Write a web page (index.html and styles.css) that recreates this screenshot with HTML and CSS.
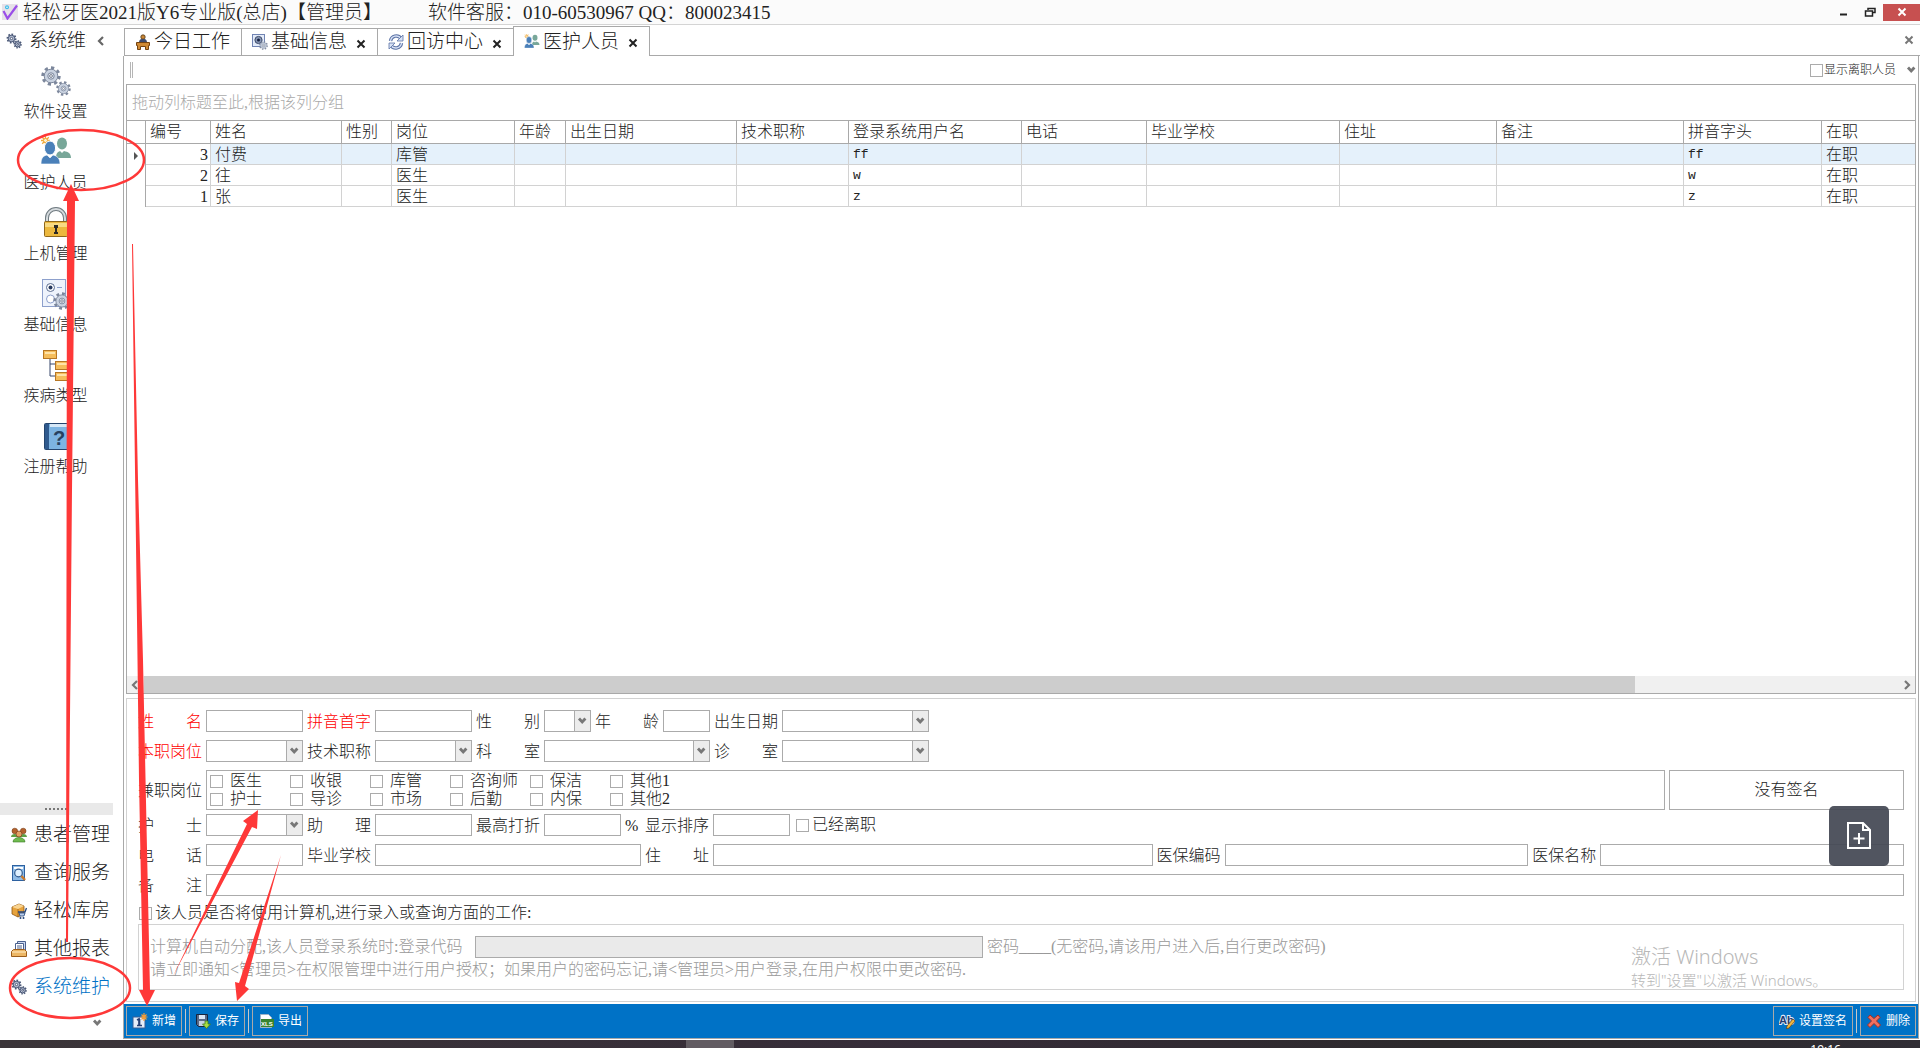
FILE: index.html
```html
<!DOCTYPE html>
<html lang="zh-CN">
<head>
    <meta charset="UTF-8">
    <meta name="viewport" content="width=device-width, initial-scale=1.0">
    <title>轻松牙医2021版Y6专业版(总店)</title>
    <link rel="stylesheet" href="styles.css">
</head>
<body>
    <!-- icon library -->
    <svg class="defs" aria-hidden="true">
        <symbol id="i-down" viewBox="0 0 10 8"><path d="M2 1.500 L5.200 5 L8.400 1.500" fill="none" stroke="currentColor" stroke-width="2.800"/></symbol>
        <symbol id="i-left" viewBox="0 0 8 10"><path d="M6 1 L2 5 L6 9" fill="none" stroke="currentColor" stroke-width="2.2"/></symbol>
        <symbol id="i-right" viewBox="0 0 8 10"><path d="M2 1 L6 5 L2 9" fill="none" stroke="currentColor" stroke-width="2.2"/></symbol>
        <symbol id="i-close" viewBox="0 0 10 10"><path d="M1.5 1.5 L8.5 8.5 M8.5 1.5 L1.5 8.5" fill="none" stroke="currentColor" stroke-width="2"/></symbol>
        <symbol id="i-gear" viewBox="0 0 20 20">
            <circle cx="10" cy="10" r="8.2" fill="none" stroke="#7c879c" stroke-width="3" pathLength="16" stroke-dasharray="1 1"/>
            <circle cx="10" cy="10" r="6.8" fill="#c9d2e0" stroke="#7c879c"/>
            <circle cx="10" cy="10" r="3.2" fill="#e3e9f2" stroke="#7c879c"/>
            <circle cx="10" cy="10" r="1.4" fill="#fff" stroke="#555f74" stroke-width=".8"/>
        </symbol>
        <symbol id="i-gears" viewBox="0 0 32 32">
            <use href="#i-gear" x="1" y="1" width="20" height="20"/>
            <use href="#i-gear" x="16" y="16" width="15" height="15"/>
        </symbol>
        <symbol id="i-gears-small" viewBox="0 0 16 16">
            <g fill="#b9c3d6" stroke="#4b5876">
                <circle cx="5.5" cy="5.5" r="4" stroke-width="2" pathLength="16" stroke-dasharray="1 1"/>
                <circle cx="5.5" cy="5.5" r="3.2"/><circle cx="5.5" cy="5.5" r="1.2" fill="#fff"/>
                <circle cx="11.7" cy="11.3" r="3.3" stroke-width="1.8" pathLength="16" stroke-dasharray="1 1"/>
                <circle cx="11.7" cy="11.3" r="2.6"/><circle cx="11.7" cy="11.3" r=".9" fill="#fff"/>
            </g>
        </symbol>
        <symbol id="i-people" viewBox="0 0 32 32">
            <path d="M5.5 0v9M1 4.5h9M2.2 1.2l6.6 6.6M8.8 1.2L2.2 7.8" stroke="#f0a93a" stroke-width="1.3"/>
            <circle cx="5.5" cy="4.5" r="2" fill="#fff2cf" stroke="#f0a93a"/>
            <ellipse cx="22" cy="7.5" rx="5" ry="6" fill="#78a799"/>
            <path d="M16 22c0-5 2-6 4-7l2 2 2-2c4 1 7 2 7 7z" fill="#78a799"/>
            <ellipse cx="10" cy="12" rx="5.6" ry="7" fill="#4a80b9" stroke="#fff"/>
            <path d="M1 28c0-6 2-8 6-9l3 3 3-3c4 1 7 3 7 9z" fill="#4a80b9" stroke="#fff" stroke-width=".6"/>
        </symbol>
        <symbol id="i-lock" viewBox="0 0 32 32">
            <path d="M7 15v-4a9 9 0 0 1 18 0v4" fill="none" stroke="#6f7a80" stroke-width="4"/>
            <path d="M7 15v-4a9 9 0 0 1 18 0v4" fill="none" stroke="#d5dadd" stroke-width="2"/>
            <rect x="4.5" y="14.5" width="23" height="15" rx="1" fill="#ecb83e" stroke="#8f671b"/>
            <path d="M5 16h22v4H5z" fill="#f8da83"/>
            <path d="M14 18h4v3h-1v4h1v2h-4v-2h1v-4h-1z" fill="#2d2a26"/>
        </symbol>
        <symbol id="i-form" viewBox="0 0 32 32">
            <rect x="2.5" y="1.5" width="23" height="27" fill="#eef3fc" stroke="#8da0cc"/>
            <circle cx="10.500" cy="9.500" r="4" fill="#fff" stroke="#5a6d92"/><circle cx="10.500" cy="9.500" r="2" fill="#26385e"/>
            <circle cx="10.500" cy="21" r="4" fill="#fff" stroke="#8da0cc"/><path d="M17 9.500h5" stroke="#8da0cc"/>
            <use href="#i-gear" x="13" y="14" width="18" height="18"/>
        </symbol>
        <symbol id="i-tree" viewBox="0 0 32 32">
            <path d="M10 9v18h7M10 15h7" fill="none" stroke="#37466a"/>
            <g fill="#f5bd5b" stroke="#b77725"><rect x="3.500" y="1.500" width="13" height="8"/><rect x="15.500" y="12.500" width="13" height="8"/><rect x="15.500" y="23.500" width="13" height="8"/></g>
            <path d="M5 3h10v2H5zM17 14h10v2H17zM17 25h10v2H17z" fill="#ffe3a8"/>
        </symbol>
        <symbol id="i-desk" viewBox="0 0 16 16">
            <circle cx="8" cy="3" r="2.200" fill="#c98635" stroke="#4d3313" stroke-width=".8"/>
            <path d="M4 9c0-4 2-4 4-4s4 0 4 4z" fill="#3e4c6e"/>
            <path d="M1.500 8.500h13v3h-1v4h-3v-3h-5v3h-3v-4h-1z" fill="#d08a34" stroke="#75430f"/>
        </symbol>
        <symbol id="i-config" viewBox="0 0 16 16">
            <rect x=".5" y=".5" width="12" height="12" fill="#e3ebf9" stroke="#7184b3"/>
            <circle cx="6.500" cy="6" r="3.600" fill="#8695b3" stroke="#3d4a69"/><circle cx="6.500" cy="6" r="1.500" fill="#16213f"/>
            <use href="#i-gear" x="7" y="7" width="9" height="9"/>
        </symbol>
        <symbol id="i-cycle" viewBox="0 0 16 16">
            <path d="M2.500 7A5.800 5.800 0 0 1 13 4.500M13.500 9A5.800 5.800 0 0 1 3 11.500" fill="none" stroke="#5d74a6" stroke-width="3.400"/>
            <path d="M2.500 7A5.800 5.800 0 0 1 13 4.500M13.500 9A5.800 5.800 0 0 1 3 11.500" fill="none" stroke="#d7e1f5" stroke-width="1.400"/>
            <path d="M15 1v6H9zM1 15V9h6z" fill="#d7e1f5" stroke="#5d74a6" stroke-width=".8"/>
        </symbol>
        <symbol id="i-patient" viewBox="0 0 16 16">
            <g stroke="#7b3d17" stroke-width=".6"><circle cx="3.800" cy="4" r="2.800" fill="#b3622d"/><circle cx="12.200" cy="4" r="2.800" fill="#b3622d"/></g>
            <path d="M0 10c0-4 7-4 8 0zM8 10c1-4 8-4 8 0z" fill="#5fa046"/>
            <circle cx="8" cy="7" r="3" fill="#e4a166" stroke="#7b3d17" stroke-width=".7"/>
            <path d="M2 15c0-6 12-6 12 0z" fill="#6fbb4f" stroke="#397a27" stroke-width=".6"/>
        </symbol>
        <symbol id="i-search" viewBox="0 0 16 16">
            <rect x="1.500" y=".5" width="12" height="15" fill="#8fbbe6" stroke="#2d61a0"/><path d="M3 2h9v2H3z" fill="#fff"/>
            <circle cx="7.500" cy="8" r="3.800" fill="#dff0ff" stroke="#315a8d" stroke-width="1.200"/><path d="M10.500 11l3.500 4" stroke="#c9792b" stroke-width="2.400"/>
        </symbol>
        <symbol id="i-box" viewBox="0 0 16 16">
            <path d="M1 4l7-3 5 2v8l-6 3-6-3z" fill="#e7a33d" stroke="#8d5513" stroke-width=".8"/><path d="M1 4l6 2 6-3-5-2z" fill="#f9d491"/><path d="M7 6v8" stroke="#8d5513" stroke-width=".7"/>
            <path d="M7 9h7l1.500-4" fill="none" stroke="#26467b" stroke-width="1.300"/><path d="M8 10h6l-1 3H9z" fill="#b9cdec" stroke="#26467b" stroke-width=".8"/><circle cx="9.500" cy="15" r="1" fill="#26467b"/><circle cx="12.500" cy="15" r="1" fill="#26467b"/>
        </symbol>
        <symbol id="i-report" viewBox="0 0 16 16">
            <path d="M6.500.5h8v9h-8z" fill="#cfdbf1" stroke="#4a608e"/><path d="M4.500 2.500h8v8h-8z" fill="#fff" stroke="#4a608e"/><path d="M6 5h5M6 7h5" stroke="#4a608e"/>
            <path d="M.5 10.500l2-2h11l2 2v5H.5z" fill="#edb765" stroke="#9c5e1b"/><path d="M1 11h14" stroke="#fff0cc"/>
        </symbol>
        <symbol id="i-logo" viewBox="0 0 16 16">
            <path d="M0 0h16v16H0z" fill="#e6e1e8"/><path d="M1.500 7l4 7.500L15 1.500" fill="none" stroke="#9a4de8" stroke-width="2.200"/>
            <circle cx="5" cy="3.200" r="2" fill="#3dbce8"/><circle cx="5" cy="3.200" r=".8" fill="#fff"/>
        </symbol>
        <symbol id="i-new" viewBox="0 0 16 16">
            <rect x="1" y="4" width="12" height="11" fill="#e6eef9" stroke="#345e97"/><path d="M5 7l2-1v6M5 12.500h5M7.500 6v6" stroke="#253f74" stroke-width="1.700" fill="none"/>
            <path d="M12 0v8M8.500 4h7M9.500 1.500l5 5M14.500 1.500l-5 5" stroke="#f19d37" stroke-width="1.200"/>
        </symbol>
        <symbol id="i-save" viewBox="0 0 16 16">
            <path d="M1.500 1.500h11v12h-9l-2-2z" fill="#5a6a86" stroke="#17243d"/><path d="M4 2h6v4H4z" fill="#dce6f5"/><path d="M4 8h6v5H4z" fill="#c5d1e4"/>
            <path d="M10 8h3v3h2.500l-4 4.500-4-4.500H10z" fill="#a6dc42" stroke="#3f7c1e" stroke-width=".8"/>
        </symbol>
        <symbol id="i-delete" viewBox="0 0 16 16">
            <path d="M4 2l4 3.500L12 2l2 2.500L10.500 8l4 4-2.500 2.500L8 10.500 4 14.500 1.500 12l4-4L2 4.500z" fill="#f0705f" stroke="#a82c1e"/>
        </symbol>
    </svg>

    <div class="app">
        <header class="titlebar">
            <svg class="icon16"><use href="#i-logo"/></svg>
            <span class="product">轻松牙医2021版Y6专业版(总店)【管理员】</span>
            <span class="support">软件客服：010-60530967 QQ：800023415</span>
            <div class="window-buttons">
                <button type="button" aria-label="最小化"><svg width="10" height="10"><path d="M2 7.500h7" stroke="#222" stroke-width="2"/></svg></button>
                <button type="button" aria-label="还原"><svg width="12" height="10"><path d="M4 3V1.500h7v4H9M1.500 4h7v5h-7z" fill="none" stroke="#222" stroke-width="1.500"/></svg></button>
                <button type="button" class="close" aria-label="关闭"><svg width="10" height="10"><use href="#i-close"/></svg></button>
            </div>
        </header>

        <div class="main">
            <aside class="sidebar">
                <div class="sidebar-head">
                    <svg class="icon16"><use href="#i-gears-small"/></svg>
                    <span class="sidebar-title">系统维护</span>
                    <button type="button" aria-label="收起"><svg width="8" height="10"><use href="#i-left"/></svg></button>
                </div>
                <nav class="modules">
                    <a href="#"><svg class="icon32"><use href="#i-gears"/></svg>软件设置</a>
                    <a href="#"><svg class="icon32"><use href="#i-people"/></svg>医护人员</a>
                    <a href="#"><svg class="icon32"><use href="#i-lock"/></svg>上机管理</a>
                    <a href="#"><svg class="icon32"><use href="#i-form"/></svg>基础信息</a>
                    <a href="#"><svg class="icon32"><use href="#i-tree"/></svg>疾病类型</a>
                    <a href="#">
                        <svg class="icon32" viewBox="0 0 32 32">
                            <rect x="4.500" y="3.500" width="24" height="26" rx="1" fill="#7db4e2" stroke="#25456e"/>
                            <path d="M5 4h4v25H5z" fill="#2f5a8e"/><path d="M10 4h18v3H10z" fill="#d6e8f7"/>
                            <text x="13" y="25" class="icon-text-lg" fill="#27415f">?</text>
                        </svg>注册帮助</a>
                </nav>
                <div class="splitter"></div>
                <nav class="groups">
                    <a href="#"><svg class="icon16"><use href="#i-patient"/></svg>患者管理</a>
                    <a href="#"><svg class="icon16"><use href="#i-search"/></svg>查询服务</a>
                    <a href="#"><svg class="icon16"><use href="#i-box"/></svg>轻松库房</a>
                    <a href="#"><svg class="icon16"><use href="#i-report"/></svg>其他报表</a>
                    <a href="#" class="active"><svg class="icon16"><use href="#i-gears-small"/></svg>系统维护</a>
                </nav>
                <div class="groups-more"><button type="button" aria-label="更多"><svg width="10" height="8"><use href="#i-down"/></svg></button></div>
            </aside>

            <div class="content">
                <div class="tabs">
                    <button type="button" class="tab"><svg class="icon16"><use href="#i-desk"/></svg>今日工作</button>
                    <button type="button" class="tab"><svg class="icon16"><use href="#i-config"/></svg>基础信息<svg class="x"><use href="#i-close"/></svg></button>
                    <button type="button" class="tab"><svg class="icon16"><use href="#i-cycle"/></svg>回访中心<svg class="x"><use href="#i-close"/></svg></button>
                    <button type="button" class="tab active"><svg class="icon16"><use href="#i-people"/></svg>医护人员<svg class="x"><use href="#i-close"/></svg></button>
                    <div class="tabs-rest"><button type="button" aria-label="关闭标签"><svg width="10" height="10"><use href="#i-close"/></svg></button></div>
                </div>

                <div class="panel">
                    <div class="toolbar">
                        <span class="grip"></span>
                        <label class="check small"><input type="checkbox">显示离职人员</label>
                        <svg width="10" height="8"><use href="#i-down"/></svg>
                    </div>

                    <section class="grid">
                        <div class="group-hint">拖动列标题至此,根据该列分组</div>
                        <table>
                            <colgroup>
                                <col class="c-mark"><col class="c-no"><col class="c-name"><col class="c-sex"><col class="c-post">
                                <col class="c-age"><col class="c-birth"><col class="c-tech"><col class="c-login"><col class="c-tel">
                                <col class="c-school"><col class="c-addr"><col class="c-note"><col class="c-pinyin"><col>
                            </colgroup>
                            <thead>
                                <tr><th></th><th>编号</th><th>姓名</th><th>性别</th><th>岗位</th><th>年龄</th><th>出生日期</th><th>技术职称</th><th>登录系统用户名</th><th>电话</th><th>毕业学校</th><th>住址</th><th>备注</th><th>拼音字头</th><th>在职</th></tr>
                            </thead>
                            <tbody>
                                <tr class="selected"><td class="mark"><svg width="4" height="8"><path d="M0 0l4 4-4 4z" fill="#555"/></svg></td><td class="no">3</td><td>付费</td><td></td><td>库管</td><td></td><td></td><td></td><td class="code">ff</td><td></td><td></td><td></td><td></td><td class="code">ff</td><td>在职</td></tr>
                                <tr><td class="mark"></td><td class="no">2</td><td>往</td><td></td><td>医生</td><td></td><td></td><td></td><td class="code">w</td><td></td><td></td><td></td><td></td><td class="code">w</td><td>在职</td></tr>
                                <tr><td class="mark"></td><td class="no">1</td><td>张</td><td></td><td>医生</td><td></td><td></td><td></td><td class="code">z</td><td></td><td></td><td></td><td></td><td class="code">z</td><td>在职</td></tr>
                            </tbody>
                        </table>
                        <div class="hscroll">
                            <svg width="8" height="10"><use href="#i-left"/></svg>
                            <div class="track"><div class="thumb"></div></div>
                            <svg width="8" height="10"><use href="#i-right"/></svg>
                        </div>
                    </section>

                    <form class="staff-form">
                        <div class="row">
                            <div class="field w97"><label class="required" for="name">姓 名</label><input type="text" id="name"></div>
                            <div class="field w97"><label class="required" for="pinyin">拼音首字</label><input type="text" id="pinyin"></div>
                            <div class="field w47"><label for="sex">性 别</label><div class="combo"><select id="sex"></select><svg><use href="#i-down"/></svg></div></div>
                            <div class="field w47"><label for="age">年 龄</label><input type="text" id="age"></div>
                            <div class="field w147"><label for="birth">出生日期</label><div class="combo"><select id="birth"></select><svg><use href="#i-down"/></svg></div></div>
                        </div>
                        <div class="row">
                            <div class="field w97"><label class="required" for="post">本职岗位</label><div class="combo"><select id="post"></select><svg><use href="#i-down"/></svg></div></div>
                            <div class="field w97"><label for="tech">技术职称</label><div class="combo"><select id="tech"></select><svg><use href="#i-down"/></svg></div></div>
                            <div class="field w166"><label for="dept">科 室</label><div class="combo"><select id="dept"></select><svg><use href="#i-down"/></svg></div></div>
                            <div class="field w147"><label for="room">诊 室</label><div class="combo"><select id="room"></select><svg><use href="#i-down"/></svg></div></div>
                        </div>
                        <div class="row posts-row">
                            <span class="label">兼职岗位</span>
                            <div class="posts">
                                <label class="check"><input type="checkbox">医生</label>
                                <label class="check"><input type="checkbox">收银</label>
                                <label class="check"><input type="checkbox">库管</label>
                                <label class="check"><input type="checkbox">咨询师</label>
                                <label class="check"><input type="checkbox">保洁</label>
                                <label class="check"><input type="checkbox">其他1</label>
                                <label class="check"><input type="checkbox">护士</label>
                                <label class="check"><input type="checkbox">导诊</label>
                                <label class="check"><input type="checkbox">市场</label>
                                <label class="check"><input type="checkbox">后勤</label>
                                <label class="check"><input type="checkbox">内保</label>
                                <label class="check"><input type="checkbox">其他2</label>
                            </div>
                            <div class="signature">没有签名</div>
                        </div>
                        <div class="row">
                            <div class="field w97"><label for="nurse">护 士</label><div class="combo"><select id="nurse"></select><svg><use href="#i-down"/></svg></div></div>
                            <div class="field w97"><label for="assistant">助 理</label><input type="text" id="assistant"></div>
                            <div class="field w77"><label for="discount">最高打折</label><input type="text" id="discount"></div>
                            <span class="unit">%</span>
                            <div class="field w77"><label for="sort">显示排序</label><input type="text" id="sort"></div>
                            <label class="check left-job"><input type="checkbox">已经离职</label>
                        </div>
                        <div class="row">
                            <div class="field w97"><label for="tel">电 话</label><input type="text" id="tel"></div>
                            <div class="field w266"><label for="school">毕业学校</label><input type="text" id="school"></div>
                            <div class="field grow-lg"><label for="addr">住 址</label><input type="text" id="addr"></div>
                            <div class="field grow"><label for="mcode">医保编码</label><input type="text" id="mcode"></div>
                            <div class="field grow"><label for="mname">医保名称</label><input type="text" id="mname"></div>
                        </div>
                        <div class="row">
                            <div class="field grow"><label for="note">备 注</label><input type="text" id="note"></div>
                        </div>
                        <label class="check use-pc"><input type="checkbox">该人员是否将使用计算机,进行录入或查询方面的工作:</label>
                        <div class="login-box">
                            <div class="login-line">
                                <label for="login">计算机自动分配,该人员登录系统时:登录代码</label>
                                <input type="text" id="login" disabled>
                                <span>密码____(无密码,请该用户进入后,自行更改密码)</span>
                            </div>
                            <p>请立即通知&lt;管理员&gt;在权限管理中进行用户授权；如果用户的密码忘记,请&lt;管理员&gt;用户登录,在用户权限中更改密码.</p>
                        </div>
                    </form>

                    <footer class="actions">
                        <button type="button"><svg class="icon16"><use href="#i-new"/></svg>新增</button>
                        <i></i>
                        <button type="button"><svg class="icon16"><use href="#i-save"/></svg>保存</button>
                        <i></i>
                        <button type="button">
                            <svg class="icon16" viewBox="0 0 16 16">
                                <path d="M2.500 1.500h8l3 3v10h-11z" fill="#fff" stroke="#9db3c9"/><rect x="3" y="6" width="13" height="8" fill="#38842e"/>
                                <text x="3" y="13" class="icon-text-xs" fill="#fff">XLS</text>
                            </svg>导出</button>
                        <span class="spacer"></span>
                        <button type="button">
                            <svg class="icon16" viewBox="0 0 16 16">
                                <text x="0" y="11" class="icon-text-sm" fill="#243c72" stroke="#dfe8f7" stroke-width="2" paint-order="stroke">Ab</text>
                                <path d="M14 6l2 2-6 7-2.500 1 .5-3z" fill="#f1b640" stroke="#5d4213" stroke-width=".7"/>
                            </svg>设置签名</button>
                        <i></i>
                        <button type="button"><svg class="icon16"><use href="#i-delete"/></svg>删除</button>
                    </footer>
                </div>
            </div>
        </div>

        <div class="taskbar"><span class="task"></span><span class="clock">19:16</span></div>

        <div class="watermark"><strong>激活 Windows</strong><span>转到"设置"以激活 Windows。</span></div>
        <button type="button" class="float-add" aria-label="添加">
            <svg width="26" height="30" fill="none" stroke="#fff" stroke-width="2"><path d="M2 2h15l7 7v18H2zM17 2v7h7M13 12v11M7.500 17.500h11"/></svg>
        </button>

        <!-- hand-drawn guide marks -->
        <svg class="marks" width="300" height="1048" fill="#fe3838">
            <ellipse cx="81" cy="160" rx="63" ry="30" fill="none" stroke="#fe3838" stroke-width="2.500"/>
            <ellipse cx="70" cy="988" rx="60" ry="30" fill="none" stroke="#fe3838" stroke-width="2.500"/>
            <path d="M71 184L79 201H75L72 490L68 942H66L67 201H63z"/>
            <path d="M132 244L133 244L138 480L143 660L150 990H155L147 1006L139 990H143L139 780L137 620z"/>
            <path d="M173 976L247 824L243 821L258 810L257 829L252 827z"/>
            <path d="M281 855L245 986L249 989L237 1001L235 982L239 983z"/>
        </svg>
    </div>
</body>
</html>
```
FILE: styles.css
```css
* {
    box-sizing: border-box;
}
body {
    margin: 0;
    font-family: "Liberation Serif", "Noto Sans CJK SC", serif;
    font-size: 16px;
    font-weight: 300;
    line-height: 20px;
    color: #222;
    background: #fff;
}
button, input, select {
    font: inherit;
    color: inherit;
    margin: 0;
}
button {
    padding: 0;
    border: none;
    background: none;
}
a {
    color: inherit;
    text-decoration: none;
}
svg {
    display: block;
    flex: none;
}
.defs {
    position: absolute;
    width: 0;
    height: 0;
}
.icon16 {
    width: 16px;
    height: 16px;
}
.icon32 {
    width: 32px;
    height: 32px;
}
.icon-text-lg {
    font: bold 20px "Liberation Sans", sans-serif;
}
.icon-text-sm {
    font: bold 11px "Liberation Sans", sans-serif;
}
.icon-text-xs {
    font: bold 6px "Liberation Sans", sans-serif;
}
.app {
    position: relative;
    display: flex;
    flex-direction: column;
    height: 100vh;
    overflow: hidden;
}

/* title bar */
.titlebar {
    display: flex;
    align-items: center;
    height: 25px;
    padding-left: 2px;
    border-bottom: 1px solid #d4d4d4;
    background: #fbfbfb;
    font-size: 19px;
    white-space: nowrap;
}
.titlebar span {
    padding-top: 2px;
}
.product {
    margin-left: 5px;
}
.support {
    margin-left: 46px;
}
.window-buttons {
    display: flex;
    margin-left: auto;
}
.window-buttons button {
    display: flex;
    align-items: center;
    justify-content: center;
    width: 27px;
    height: 17px;
}
.window-buttons .close {
    width: 37px;
    background: #c75050;
    color: #fff;
}

/* sidebar */
.main {
    display: flex;
    flex: 1;
    min-height: 0;
}
.sidebar {
    display: flex;
    flex-direction: column;
    width: 123px;
    padding-right: 10px;
}
.sidebar-head {
    display: flex;
    align-items: center;
    height: 31px;
    padding-left: 6px;
    font-size: 19px;
}
.sidebar-title {
    width: 58px;
    margin-left: 7px;
    overflow: hidden;
    white-space: nowrap;
}
.sidebar-head button {
    margin-left: 10px;
    color: #666;
}
.modules {
    flex: 1;
    padding-right: 2px;
}
.modules a {
    display: flex;
    flex-direction: column;
    align-items: center;
    gap: 5px;
    height: 71px;
    padding-top: 9px;
}
.splitter {
    height: 12px;
    padding: 5px 45px;
    background: #e9e9e9;
}
.splitter::before {
    content: "";
    display: block;
    height: 2px;
    background: repeating-linear-gradient(90deg, #777 0 2px, transparent 2px 4px);
}
.groups a {
    display: flex;
    align-items: center;
    gap: 7px;
    height: 38px;
    padding-top: 2px;
    padding-left: 11px;
    font-size: 19px;
}
.groups .active {
    color: #0072c6;
}
.groups-more {
    display: flex;
    align-items: center;
    justify-content: flex-end;
    height: 35px;
    padding-right: 11px;
    color: #777;
}

/* tabs */
.content {
    display: flex;
    flex: 1;
    flex-direction: column;
    min-width: 0;
}
.tabs {
    display: flex;
    align-items: flex-end;
    height: 31px;
    padding-left: 1px;
}
.tab {
    display: flex;
    align-items: center;
    gap: 3px;
    height: 28px;
    padding: 0 11px 0 10px;
    border: 1px solid #a9a9a9;
    border-right: none;
    background: #fff;
    font-size: 19px;
    white-space: nowrap;
}
.tab .x {
    width: 10px;
    height: 10px;
    margin: 3px 0 0 6px;
}
.tab.active {
    height: 30px;
    border-right: 1px solid #a9a9a9;
    border-bottom: none;
}
.tabs-rest {
    display: flex;
    flex: 1;
    align-items: center;
    justify-content: flex-end;
    align-self: stretch;
    padding-right: 6px;
    border-bottom: 1px solid #a9a9a9;
    color: #777;
}
.panel {
    display: flex;
    flex: 1;
    flex-direction: column;
    min-height: 0;
    margin-right: 1px;
    margin-bottom: 1px;
    border: 1px solid #a9a9a9;
    border-top: none;
}
.toolbar {
    display: flex;
    align-items: center;
    gap: 10px;
    height: 28px;
    padding: 0 2px 0 6px;
    color: #777;
}
.grip {
    width: 3px;
    height: 16px;
    margin-right: auto;
    border: solid #b5b5b5;
    border-width: 0 1px;
}

/* check boxes */
.check {
    display: flex;
    align-items: center;
    gap: 3px;
    white-space: nowrap;
}
.check input {
    appearance: none;
    width: 13px;
    height: 13px;
    border: 1px solid #ababab;
    background: #fff;
}
.check.small {
    gap: 1px;
    font-size: 12px;
    color: #222;
}

/* grid */
.grid {
    display: flex;
    flex: 1;
    flex-direction: column;
    min-height: 0;
    margin: 0 2px;
    border: 1px solid #a9a9a9;
}
.group-hint {
    height: 36px;
    padding-left: 5px;
    border-bottom: 1px solid #a9a9a9;
    line-height: 36px;
    color: #aaa;
}
table {
    width: 100%;
    table-layout: fixed;
    border-spacing: 0;
    margin-bottom: auto;
}
th, td {
    padding: 0 0 0 4px;
    line-height: 20px;
    text-align: left;
    white-space: nowrap;
    border-right: 1px solid #d2d2d2;
    border-bottom: 1px solid #d2d2d2;
}
td {
    height: 21px;
    padding-top: 2px;
    line-height: 18px;
}
th {
    height: 23px;
    border-color: #a9a9a9;
    font-weight: 300;
}
th:last-child, td:last-child {
    border-right: none;
}
.mark {
    padding-left: 7px;
    border-right-color: #a9a9a9;
    border-bottom: none;
}
.no {
    padding-right: 2px;
    text-align: right;
}
.code {
    font-family: "Liberation Mono", monospace;
    font-size: 13px;
}
.selected td:nth-child(n+3) {
    background: #e5f1fb;
}
.c-mark { width: 19px; }
.c-no { width: 65px; }
.c-name { width: 131px; }
.c-sex { width: 50px; }
.c-post { width: 123px; }
.c-age { width: 51px; }
.c-birth { width: 171px; }
.c-tech { width: 112px; }
.c-login { width: 173px; }
.c-tel { width: 125px; }
.c-school { width: 193px; }
.c-addr { width: 157px; }
.c-note { width: 187px; }
.c-pinyin { width: 138px; }
.hscroll {
    display: flex;
    align-items: center;
    gap: 5px;
    height: 17px;
    padding: 0 4px;
    background: #f0f0f0;
    color: #777;
}
.track {
    flex: 1;
    height: 17px;
}
.thumb {
    width: 85%;
    height: 17px;
    background: #cdcdcd;
}

/* form */
.staff-form {
    margin: 4px 2px 2px;
    padding: 11px 11px 11px;
    border: 1px solid #d2d2d2;
}
.row {
    display: flex;
    gap: 4px;
    margin-bottom: 8px;
    white-space: nowrap;
}
.field {
    display: flex;
    align-items: center;
}
.field label, .row .label {
    flex: none;
    width: 64px;
    margin-right: 4px;
    padding-top: 2px;
    text-align-last: justify;
}
.required {
    color: #f00;
}
.field input, .combo, .login-line input {
    flex: 1;
    min-width: 0;
    height: 22px;
    border: 1px solid #ababab;
    background: #fff;
}
.w47 { width: 115px; }
.w77 { width: 145px; }
.w97 { width: 165px; }
.w147 { width: 215px; }
.w166 { width: 234px; }
.w266 { width: 334px; }
.grow { flex: 372 1 0; }
.grow-lg { flex: 508 1 0; }
.combo {
    position: relative;
}
.combo select {
    appearance: none;
    display: block;
    width: 100%;
    height: 20px;
    border: none;
    background: linear-gradient(#ababab, #ababab) right 15px top / 1px 100% no-repeat,
        linear-gradient(#ececec, #ececec) right top / 15px 100% no-repeat;
}
.combo svg {
    position: absolute;
    top: 6px;
    right: 3px;
    width: 10px;
    height: 8px;
    color: #777;
    pointer-events: none;
}
.posts-row {
    align-items: center;
    gap: 0;
    margin-bottom: 4px;
}
.posts {
    display: grid;
    flex: 1;
    grid-template-columns: repeat(6, 80px);
    height: 40px;
    padding: 1px 3px;
    border: 1px solid #ababab;
}
.posts .check {
    gap: 7px;
    line-height: 18px;
}
.signature {
    width: 235px;
    height: 40px;
    margin-left: 4px;
    border: 1px solid #ababab;
    line-height: 38px;
    text-align: center;
}
.unit {
    width: 16px;
    padding-top: 2px;
}
.left-job {
    margin-left: 2px;
}
.use-pc {
    height: 20px;
    padding-top: 2px;
    padding-left: 1px;
    margin-top: -2px;
    margin-bottom: 2px;
}
.login-box {
    height: 66px;
    padding: 11px;
    border: 1px solid #d2d2d2;
    color: #999;
}
.login-line {
    display: flex;
    align-items: center;
    gap: 4px;
}
.login-line label {
    width: 321px;
}
.login-line input {
    flex: none;
    width: 508px;
    background: #eaeaea;
}
.login-box p {
    margin: 2px 0 0;
}

/* action bar */
.actions {
    display: flex;
    align-items: center;
    height: 34px;
    padding: 0 2px;
    background: #0072c6;
    color: #fff;
    font-size: 12px;
}
.actions button {
    display: flex;
    align-items: center;
    gap: 4px;
    height: 30px;
    padding: 0 5px;
    border: 1px solid #a9a9a9;
    font-weight: 400;
}
.actions i {
    width: 1px;
    height: 24px;
    margin: 0 3px;
    background: #c8c8c8;
}
.spacer {
    flex: 1;
}
.taskbar {
    display: flex;
    justify-content: space-between;
    height: 8px;
    padding: 0 79px 0 686px;
    overflow: hidden;
    background: linear-gradient(90deg, #3b3539, #362c38 50%, #2d2a2c 75%, #302d34);
    color: #fff;
    font-size: 12px;
}
.task {
    width: 48px;
    background: #625c62;
}
.clock {
    font-family: "Noto Sans", sans-serif;
    font-weight: 400;
}

/* overlays */
.watermark {
    position: absolute;
    right: 94px;
    bottom: 58px;
    width: 195px;
    color: #b8b8b8;
    font-family: "Noto Sans", "Noto Sans CJK SC", sans-serif;
    font-size: 15px;
    white-space: nowrap;
}
.watermark strong {
    display: block;
    font-size: 20px;
    font-weight: 300;
    line-height: 26px;
}
.float-add {
    position: absolute;
    right: 31px;
    bottom: 182px;
    display: flex;
    align-items: center;
    justify-content: center;
    width: 60px;
    height: 60px;
    border-radius: 5px;
    background: rgba(66, 71, 82, 0.92);
}
.marks {
    position: absolute;
    top: 0;
    left: 0;
    pointer-events: none;
}
```
